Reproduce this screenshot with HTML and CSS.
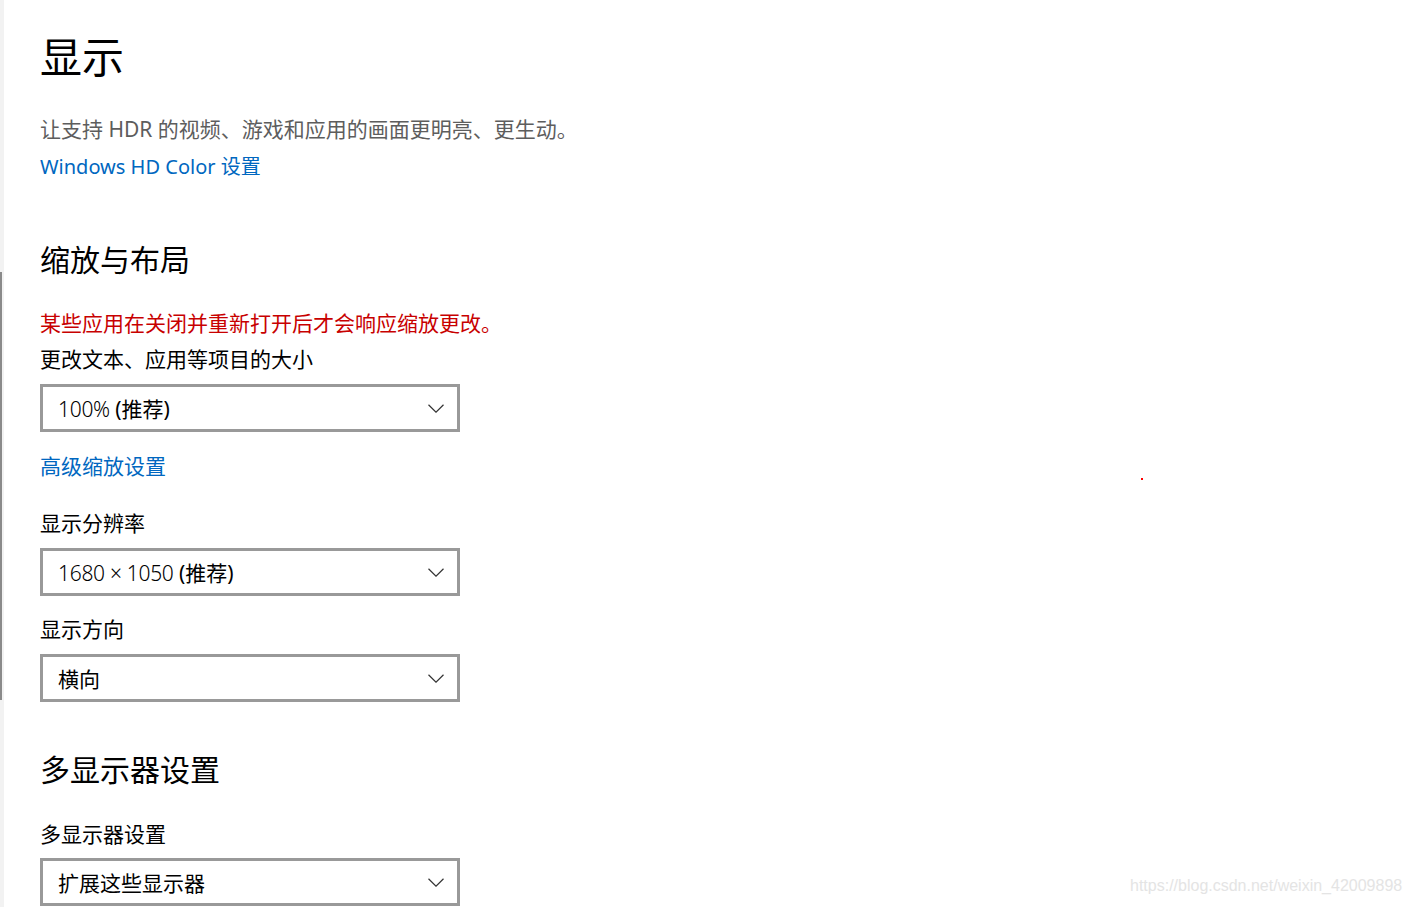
FILE: index.html
```html
<!DOCTYPE html>
<html lang="zh-CN">
<head>
    <meta charset="UTF-8">
    <meta name="viewport" content="width=device-width, initial-scale=1.0">
    <title>显示</title>
    <link rel="stylesheet" href="styles.css">
</head>
<body>
    <div class="window">
        <div class="scroll-thumb"></div>
        <main class="content">
            <h1 class="title">显示</h1>
            <p class="subtitle">让支持 HDR 的视频、游戏和应用的画面更明亮、更生动。</p>
            <a class="link hdr-link" href="#">Windows HD Color 设置</a>

            <h2 class="section">缩放与布局</h2>
            <p class="warning">某些应用在关闭并重新打开后才会响应缩放更改。</p>
            <p class="label label-scale">更改文本、应用等项目的大小</p>
            <div class="select">
                <span><span class="num">100%</span> (推荐)</span>
                <svg class="chevron" viewBox="0 0 16 9"><path d="M0.5 0.8 L8 8.2 L15.5 0.8"/></svg>
            </div>
            <a class="link adv-link" href="#">高级缩放设置</a>

            <p class="label label-res">显示分辨率</p>
            <div class="select">
                <span><span class="num">1680 × 1050</span> (推荐)</span>
                <svg class="chevron" viewBox="0 0 16 9"><path d="M0.5 0.8 L8 8.2 L15.5 0.8"/></svg>
            </div>

            <p class="label label-dir">显示方向</p>
            <div class="select">
                <span>横向</span>
                <svg class="chevron" viewBox="0 0 16 9"><path d="M0.5 0.8 L8 8.2 L15.5 0.8"/></svg>
            </div>

            <h2 class="section section-multi">多显示器设置</h2>
            <p class="label label-multi">多显示器设置</p>
            <div class="select">
                <span>扩展这些显示器</span>
                <svg class="chevron" viewBox="0 0 16 9"><path d="M0.5 0.8 L8 8.2 L15.5 0.8"/></svg>
            </div>
        </main>
        <div class="red-dot"></div>
        <div class="watermark">https://blog.csdn.net/weixin_42009898</div>
    </div>
</body>
</html>
```

FILE: styles.css
```css
/* Windows 设置 - 显示页 */
:root {
    --text: #000;
    --muted: #5d5d5d;
    --link: #0067c0;
    --warn: #c80000;
    --border: #999;
}

* {
    box-sizing: border-box;
}

body {
    margin: 0;
    background: #fff;
    font-family: "Segoe UI", "Noto Sans", "Noto Sans CJK SC", sans-serif;
    color: var(--text);
    overflow: hidden;
}

.window {
    position: relative;
    height: 907px;
    border-left: 4px solid #f2f2f2;
}

.scroll-thumb {
    position: absolute;
    left: -4px;
    top: 272px;
    width: 2px;
    height: 428px;
    background: #8a8a8a;
}

.content {
    padding-left: 36px;
    overflow: hidden;
    height: 907px;
}

.title {
    margin: 29px 0 0;
    font-size: 42px;
    line-height: 56px;
    font-weight: 400;
}

.subtitle {
    margin: 29px 0 0;
    font-size: 21px;
    line-height: 30px;
    color: var(--muted);
}

.link {
    display: block;
    width: max-content;
    color: var(--link);
    text-decoration: none;
    font-size: 21px;
    line-height: 30px;
}

.hdr-link {
    margin-top: 8px;
    font-size: 20px;
}

.section {
    margin: 58px 0 0;
    font-size: 30px;
    line-height: 40px;
    font-weight: 400;
}

.section-multi {
    margin-top: 48px;
}

.warning {
    margin: 28px 0 0;
    font-size: 21px;
    line-height: 30px;
    color: var(--warn);
}

.label {
    margin: 0;
    font-size: 21px;
    line-height: 30px;
}

.label-scale { margin-top: 6px; }
.label-res { margin-top: 27px; }
.label-dir { margin-top: 18px; }
.label-multi { margin-top: 29px; }

.select {
    display: flex;
    align-items: center;
    justify-content: space-between;
    width: 420px;
    height: 48px;
    margin-top: 10px;
    padding: 0 13px 0 15px;
    border: 3px solid var(--border);
    font-size: 21px;
}

.select .num {
    font-weight: 300;
    letter-spacing: -0.3px;
}

.label-multi + .select {
    margin-top: 9px;
}

.chevron {
    width: 16px;
    height: 9px;
    fill: none;
    stroke: #333;
    stroke-width: 1.2;
}

.adv-link {
    margin-top: 19px;
}

.red-dot {
    position: absolute;
    left: 1137px;
    top: 478px;
    width: 2px;
    height: 2px;
    background: #f00;
}

.watermark {
    position: absolute;
    left: 1126px;
    top: 877px;
    font-family: "Liberation Sans", Arial, sans-serif;
    font-size: 16px;
    color: #e4e4e4;
}
```
